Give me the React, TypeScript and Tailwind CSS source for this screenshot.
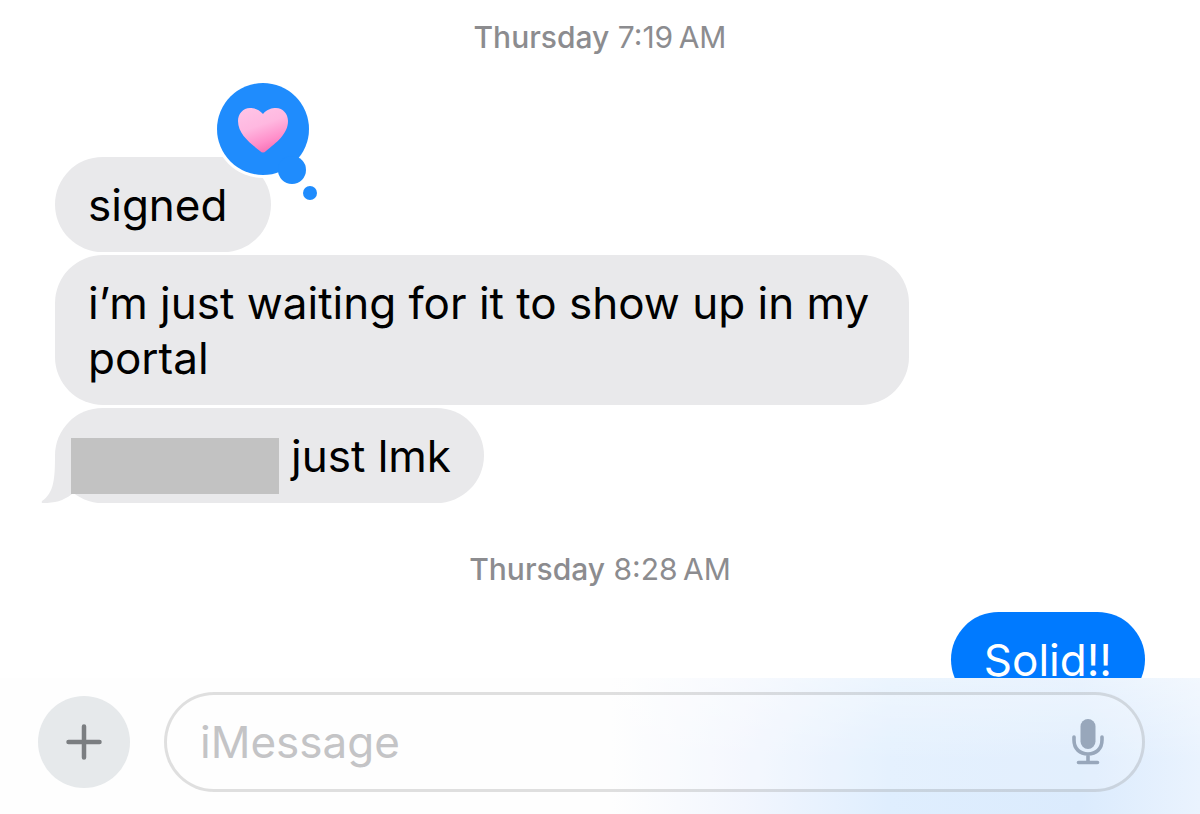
import { useState } from "react";
import type { ReactNode } from "react";

interface TimestampProps {
  day: string;
  time: string;
}

interface BubbleProps {
  children: ReactNode;
  sent?: boolean;
  className?: string;
}

const Timestamp = ({ day, time }: TimestampProps) => (
  <p className="text-center text-[30px] leading-9 text-[#8c8c8f]">
    <span className="font-medium">{day}</span> {time}
  </p>
);

const Bubble = ({ children, sent = false, className = "px-[33px] pt-[21px] pb-[19px]" }: BubbleProps) => (
  <div
    className={`relative max-w-[854px] rounded-[48px] text-[44px] leading-[55px] ${
      sent ? "self-end bg-[#007aff] text-white" : "self-start bg-[#e9e9eb] text-black"
    } ${className}`}>
    {children}
  </div>
);

const HeartReaction = () => (
  <svg
    className="absolute -top-20 -right-[50px] h-[126px] w-[108px]"
    viewBox="0 0 108 126"
    role="img"
    aria-label="Loved">
    <defs>
      <linearGradient id="heart" x1="0.25" y1="0" x2="0.65" y2="1">
        <stop offset="0" stopColor="#ffc3e6" />
        <stop offset="0.4" stopColor="#ffb8e0" />
        <stop offset="0.75" stopColor="#ff8fca" />
        <stop offset="1" stopColor="#f56db2" />
      </linearGradient>
    </defs>
    <g fill="white">
      <circle cx="50" cy="52" r="49" />
      <circle cx="97" cy="116" r="9" />
    </g>
    <g fill="#1f8cfd">
      <circle cx="50" cy="52" r="46" />
      <circle cx="79" cy="93" r="14" />
      <circle cx="97" cy="116" r="7" />
    </g>
    <path
      d="M50 37C46 32 41 31 37 31C30 31 25 37 25 44C25 57 37 66 47 74Q50 77 53 74C63 66 75 57 75 44C75 37 70 31 63 31C59 31 54 32 50 37Z"
      fill="url(#heart)"
    />
  </svg>
);

const Tail = () => (
  <svg
    className="absolute bottom-0 -left-[14px] h-12 w-[50px] text-[#e9e9eb]"
    viewBox="0 0 50 48"
    fill="currentColor"
    aria-hidden="true">
    <path d="M14 0C14 24 13 38 1 46Q0 48 2 48C14 48 22 46 31 39L50 20V0Z" />
  </svg>
);

const PlusIcon = () => (
  <svg className="size-9" viewBox="0 0 36 36" fill="none" stroke="currentColor" aria-hidden="true">
    <path d="M18 2.5V33.5M2.5 18H33.5" strokeWidth="4.5" strokeLinecap="round" />
  </svg>
);

const MicIcon = () => (
  <svg className="h-12 w-8" viewBox="0 0 32 48" fill="none" stroke="currentColor" aria-hidden="true">
    <rect x="8.5" y="1" width="15" height="30" rx="7.5" fill="currentColor" stroke="none" />
    <path
      d="M2 19V22C2 31 8 36 16 36S30 31 30 22V19M16 36V44M6.5 44.5H25.5"
      strokeWidth="3.6"
      strokeLinecap="round"
    />
  </svg>
);

const App = () => {
  const [draft, setDraft] = useState("");

  return (
    <div className="flex h-screen flex-col bg-white font-['Inter',sans-serif]">
      <main className="flex min-h-0 flex-1 flex-col overflow-hidden px-[55px] pt-[19px]">
        <Timestamp day="Thursday" time={"7:19\u202fAM"} />
        <div className="mt-[102px] flex flex-col gap-[3px]">
          <Bubble className="pt-[21px] pr-11 pb-[19px] pl-[33px]">
            signed
            <HeartReaction />
          </Bubble>
          <Bubble>i’m just waiting for it to show up in my portal</Bubble>
          <Bubble className="flex gap-3 pr-[33px] pl-4">
            <Tail />
            <span className="relative mt-[30px] mb-[9px] w-52 bg-[#c2c2c2]" />
            <span className="pt-[21px] pb-[19px]">just lmk</span>
          </Bubble>
        </div>
        <div className="mt-12 flex flex-col gap-[25px]">
          <Timestamp day="Thursday" time={"8:28\u202fAM"} />
          <Bubble sent>Solid!!</Bubble>
        </div>
      </main>

      <footer className="flex shrink-0 items-center gap-[34px] bg-[#fefefe] bg-[linear-gradient(to_bottom,#ffffff66,#ffffff00_60%),linear-gradient(to_right,#fefefe_51%,#f2f6fe_62%,#dfeefe_74%,#dbebfd_90%,#eaf3fe_100%)] pt-[14px] pr-[55px] pb-[22px] pl-[38px]">
        <button
          type="button"
          aria-label="Add attachment"
          className="flex size-[92px] shrink-0 items-center justify-center rounded-full bg-[#e6e9eb] text-[#7b7e81]">
          <PlusIcon />
        </button>
        <div className="flex h-[100px] min-w-0 flex-1 items-center rounded-full border-3 border-black/12 bg-white/20 pr-[38px] pl-[33px]">
          <input
            type="text"
            aria-label="iMessage"
            placeholder="iMessage"
            value={draft}
            onChange={(e) => setDraft(e.target.value)}
            className="min-w-0 flex-1 bg-transparent text-[44px] leading-[55px] text-black outline-none placeholder:text-[#c4c4c6]"
          />
          <button type="button" aria-label="Dictate" className="text-[#98a7bb]">
            <MicIcon />
          </button>
        </div>
      </footer>
    </div>
  );
};

export default App;
